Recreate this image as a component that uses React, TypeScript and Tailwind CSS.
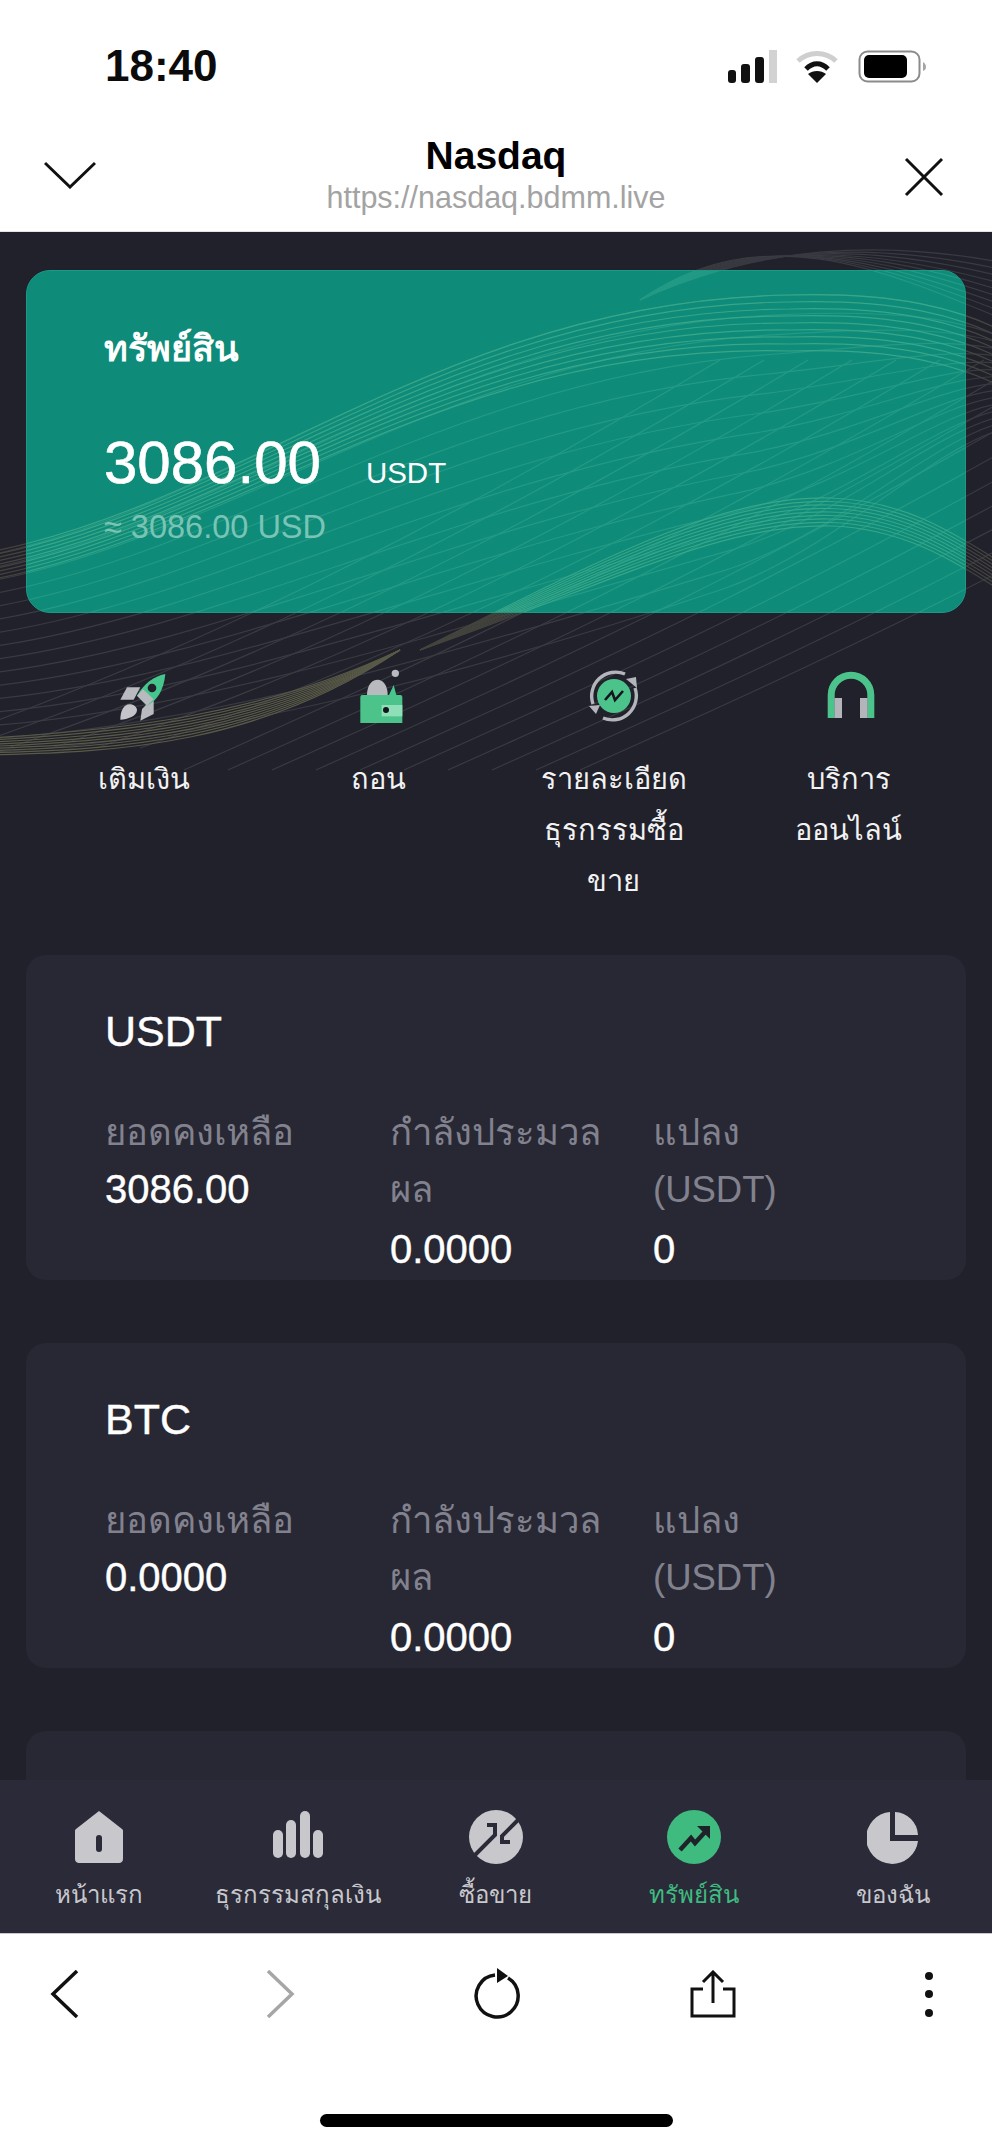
import type { FC } from "react";

const lerp = (a: number, b: number, t: number) => a + (b - a) * t;

// top and bottom edge of the fan of lines, page coordinates
const topEdge = [-10, 555, 250, 500, 450, 300, 790, 295, 900, 292, 960, 310, 1000, 330];
const bottomEdge = [-10, 752, 200, 742, 450, 680, 720, 590, 830, 553, 930, 450, 1000, 430];

const fanPath = (t: number) => {
	const p = topEdge.map((v, i) => lerp(v, bottomEdge[i], t));
	return `M${p[0]} ${p[1]}C${p[2]} ${p[3]} ${p[4]} ${p[5]} ${p[6]} ${p[7]}C${p[8]} ${p[9]} ${p[10]} ${p[11]} ${p[12]} ${p[13]}`;
};

const fanLines = Array.from({ length: 16 }, (_, i) => i / 15);
const bandLines = Array.from({ length: 9 }, (_, i) => i * 3.5);
const diagonals = Array.from({ length: 16 }, (_, i) => -80 + i * 44);

const Waves: FC<{ line: string; band: string; className: string }> = ({ line, band, className }) => (
	<svg viewBox="0 0 992 800" width="992" height="800" fill="none" className={className}>
		{fanLines.map((t) => (
			<path key={t} d={fanPath(t)} stroke={line} strokeWidth="1.2" />
		))}
		{diagonals.map((x) => (
			<path key={x} d={`M${x} ${x < 150 ? 748 : 770}C${x + 200} 680 ${x + 450} 570 ${x + 800} 360`} stroke={line} strokeWidth="1.2" />
		))}
		{bandLines.map((o) => (
			<path key={o} d={`M-10 ${552 + o}C250 ${500 + o} 450 ${300 + o * 1.5} 790 ${295 + o * 2}C900 ${292 + o * 2} 960 ${310 + o * 2} 1000 ${330 + o * 2}`} stroke={band} strokeWidth="1.2" />
		))}
		{bandLines.map((o) => (
			<path key={o} d={`M420 650C600 ${560 + o} 720 ${495 + o} 830 ${498 + o}C900 ${500 + o} 950 ${530 + o} 1000 ${562 + o}`} stroke={band} strokeWidth="1.2" />
		))}
		{bandLines.map((o) => (
			<path key={o} d={`M-10 ${738 + o * 0.6}C120 ${730 + o * 0.8} 260 ${716 + o} 400 650`} stroke="#5a5a48" strokeWidth="1.2" />
		))}
		{bandLines.map((o) => (
			<path key={o} d={`M640 300C760 ${245 - o} 880 ${240 + o} 1000 ${262 + o * 2}`} stroke={line} strokeWidth="1.2" />
		))}
	</svg>
);

const Rocket = () => (
	<svg viewBox="0 0 180 180" width="60" height="60" className="-translate-x-[7px] translate-y-[8px]">
		<path d="M40 86L60 49H100L80 86Z" fill="#b9b9c0" />
		<path d="M100 149L140 129V79L105 114Z" fill="#b9b9c0" />
		<path d="M175 9C140 16 110 39 90 74L120 104C150 89 170 59 175 9Z" fill="#46c68d" />
		<path d="M90 74L120 104L140 85L108 55Z" fill="#b9b9c0" />
		<circle cx="135" cy="51" r="13" fill="#21212b" />
		<path d="M68 100C50 100 40 120 40 146C62 146 90 135 90 118C90 108 80 100 68 100Z" fill="#c4c4ca" />
	</svg>
);

const Wallet = () => (
	<svg viewBox="0 0 180 180" width="60" height="60" className="-translate-x-[2px]">
		<circle cx="145" cy="31" r="11" fill="#b9b9c0" />
		<path d="M60 96C60 62 78 50 92 50C106 50 122 64 122 96Z" fill="#b9b9c0" />
		<path d="M126 96L140 66L148 96Z" fill="#46c68d" />
		<rect x="40" y="96" width="126" height="90" rx="6" fill="#4dc38c" />
		<rect x="104" y="126" width="62" height="34" fill="#8fe0b8" />
		<circle cx="117" cy="141" r="9" fill="#14141c" />
	</svg>
);

const Exchange = () => (
	<svg viewBox="0 0 60 60" width="60" height="60" fill="none">
		<path d="M9 41A24 24 0 0 1 41 11" stroke="#b4b4bb" strokeWidth="3.4" />
		<path d="M51 25A24 24 0 0 1 19 55" stroke="#b4b4bb" strokeWidth="3.4" />
		<path d="M42 16L52 14L53 25Z" fill="#b4b4bb" />
		<path d="M5 43L16 42L12 51Z" fill="#b4b4bb" />
		<circle cx="30" cy="33" r="17" fill="#4dc38c" />
		<path d="M21 37L28 29L31 37L39 28" stroke="#14141c" strokeWidth="2.6" />
	</svg>
);

const Headset = () => (
	<svg viewBox="0 0 60 60" width="60" height="60" fill="none" className="translate-x-[2px]">
		<path d="M10.2 55V32A19.8 19.8 0 0 1 49.8 32V55" stroke="#4dc38c" strokeWidth="7" />
		<rect x="13.5" y="35" width="7.5" height="20" fill="#b4b4bb" />
		<rect x="39" y="35" width="7.5" height="20" fill="#b4b4bb" />
	</svg>
);

const HomeTab = () => (
	<svg viewBox="0 0 48 54" width="48" height="54">
		<path d="M24 1L47 19C47.600 19.500 48 20 48 21V49C48 51.500 46 53 44 53H4C2 53 0 51.500 0 49V21C0 20 .4 19.500 1 19Z" fill="#c8c8cc" />
		<rect x="21" y="25" width="6" height="17" rx="3" fill="#2a2a38" />
	</svg>
);

const BarsTab = () => (
	<svg viewBox="0 0 50 54" width="50" height="54" fill="#c8c8cc">
		<rect x="0" y="20" width="10" height="28" rx="5" />
		<rect x="13" y="10" width="10" height="38" rx="5" />
		<rect x="27" y="1" width="10" height="47" rx="5" />
		<rect x="40" y="20" width="10" height="28" rx="5" />
	</svg>
);

const SwapTab = () => (
	<svg viewBox="0 0 54 54" width="54" height="54" fill="none">
		<circle cx="27" cy="27" r="27" fill="#c8c8cc" />
		<path d="M4 47L26 25V15H18" stroke="#2a2a38" strokeWidth="4" />
		<path d="M51 8L33 26V32H41" stroke="#2a2a38" strokeWidth="4" />
	</svg>
);

const TrendTab = () => (
	<svg viewBox="0 0 54 54" width="54" height="54" fill="none">
		<circle cx="27" cy="27" r="27" fill="#3fbb80" />
		<path d="M13 40L24 28L28 33L39 21" stroke="#20222a" strokeWidth="4.500" />
		<path d="M30 16H43V29Z" fill="#20222a" />
	</svg>
);

const PieTab = () => (
	<svg viewBox="0 0 52 54" width="52" height="54" fill="#c8c8cc">
		<path d="M23 2A26 26 0 1 0 51 31H23Z" />
		<path d="M28 2A24 24 0 0 1 51 25H28Z" />
	</svg>
);

const actions = [
	{ icon: <Rocket />, label: ["เติมเงิน"] },
	{ icon: <Wallet />, label: ["ถอน"] },
	{ icon: <Exchange />, label: ["รายละเอียด", "ธุรกรรมซื้อ", "ขาย"] },
	{ icon: <Headset />, label: ["บริการ", "ออนไลน์"] },
];

const coins = [
	{ name: "USDT", balance: "3086.00" },
	{ name: "BTC", balance: "0.0000" },
];

const tabs = [
	{ icon: <HomeTab />, label: "หน้าแรก" },
	{ icon: <BarsTab />, label: "ธุรกรรมสกุลเงิน" },
	{ icon: <SwapTab />, label: "ซื้อขาย" },
	{ icon: <TrendTab />, label: "ทรัพย์สิน", active: true },
	{ icon: <PieTab />, label: "ของฉัน" },
];

export default function App() {
	return (
		<div className="flex h-[2147px] w-[992px] flex-col overflow-hidden bg-white font-['Liberation_Sans','Noto_Sans',sans-serif]">
			<div className="flex h-[115px] flex-none items-start justify-between pl-[105px] pr-[66px] pt-[42px]">
				<span className="text-[44px] font-bold leading-[48px] text-[#0b0b0b]">18:40</span>
				<div className="flex items-center gap-[20px] pt-[8px]">
					<svg viewBox="0 0 49 33" width="49" height="33" className="-mr-[1px]">
						<rect x="0" y="20" width="8" height="13" rx="3" fill="#111" />
						<rect x="13" y="14" width="9" height="19" rx="3" fill="#111" />
						<rect x="27" y="7" width="9" height="26" rx="3" fill="#111" />
						<rect x="41" y="0" width="8" height="33" fill="#d2d2d2" />
					</svg>
					<svg viewBox="0 0 42 33" width="42" height="33" fill="none">
						<path d="M2 11C13 1 29 1 40 11" stroke="#cfcfcf" strokeWidth="5" />
						<path d="M10 19C17 12 25 12 32 19" stroke="#111" strokeWidth="5" />
						<path d="M21 33L12 24C17 20 25 20 30 24Z" fill="#111" />
					</svg>
					<svg viewBox="0 0 68 33" width="68" height="33" fill="none">
						<rect x="1.500" y="1.500" width="60" height="30" rx="8" stroke="#8b8b8b" strokeWidth="2" />
						<rect x="6" y="5" width="43" height="23" rx="5" fill="#000" />
						<path d="M65 12C67 13 68 15 68 17C68 19 67 20 65 21Z" fill="#a5a5a5" />
					</svg>
				</div>
			</div>
			<div className="grid h-[117px] flex-none grid-cols-[1fr_auto_1fr] border-b border-[#e4e4e4] px-[44px] pt-[19px]">
				<svg viewBox="0 0 52 28" width="52" height="28" fill="none" className="mt-[27px]">
					<path d="M1 2L26 26L51 2" stroke="#111" strokeWidth="3" />
				</svg>
				<div className="flex flex-col items-center">
					<span className="text-[39px] font-bold leading-[44px] text-black">Nasdaq</span>
					<span className="text-[30.5px] leading-[38px] text-[#a3a3a3]">https://nasdaq.bdmm.live</span>
				</div>
				<svg viewBox="0 0 40 40" width="40" height="40" fill="none" className="ml-auto mr-[4px] mt-[23px]">
					<path d="M2 2L38 38M38 2L2 38" stroke="#111" strokeWidth="3" />
				</svg>
			</div>

			<main className="relative min-h-0 flex-1 overflow-hidden bg-[#21212b] px-[26px] pt-[38px]">
				<Waves line="#3a3a42" band="#45453f" className="absolute left-0 top-[-232px]" />
				<section className="relative h-[343px] overflow-hidden rounded-[24px] border border-[#1c9a86] bg-[#0f8b79] pl-[77px] pt-[58px]">
					<Waves line="#239a86" band="#38a688" className="absolute left-[-27px] top-[-271px]" />
					<div className="relative">
						<h1 className="text-[36px] font-bold leading-[40px] text-white">ทรัพย์สิน</h1>
						<div className="mt-[64px] flex items-baseline gap-[45px] text-white">
							<span className="text-[60px] leading-[60px] [-webkit-text-stroke:0.6px_white]">3086.00</span>
							<span className="text-[29.5px]">USDT</span>
						</div>
						<p className="mt-[14px] text-[32.5px] leading-[36px] text-[#7ac4b6]">≈ 3086.00 USD</p>
					</div>
				</section>

				<div className="relative mt-[50px] grid grid-cols-4">
					{actions.map((a) => (
						<div key={a.label[0]} className="flex flex-col items-center">
							<div className="h-[60px]">{a.icon}</div>
							<div className="mt-[31px] text-center text-[29px] leading-[51px] text-[#f2f2f2]">
								{a.label.map((l) => (
									<div key={l}>{l}</div>
								))}
							</div>
						</div>
					))}
				</div>

				<div className="relative mt-[48px] flex flex-col gap-[63px]">
					{coins.map((c) => (
						<section key={c.name} className="h-[325px] flex-none rounded-[20px] bg-[#282835] pl-[79px] pt-[50px]">
							<h2 className="text-[43px] leading-[52px] text-white [-webkit-text-stroke:0.4px_white]">{c.name}</h2>
							<div className="mt-[47px] grid grid-cols-[285px_263px_1fr] text-[36.5px] leading-[57px]">
								<div>
									<div className="text-[#82828e]">ยอดคงเหลือ</div>
									<div className="text-[40px] text-white [-webkit-text-stroke:0.4px_white]">{c.balance}</div>
								</div>
								<div>
									<div className="text-[#82828e]">กำลังประมวล<br />ผล</div>
									<div className="mt-[3px] text-[40px] text-white [-webkit-text-stroke:0.4px_white]">0.0000</div>
								</div>
								<div>
									<div className="text-[#82828e]">แปลง<br />(USDT)</div>
									<div className="mt-[3px] text-[40px] text-white [-webkit-text-stroke:0.4px_white]">0</div>
								</div>
							</div>
						</section>
					))}
					<section className="h-[325px] flex-none rounded-[20px] bg-[#282835]" />
				</div>
			</main>

			<nav className="grid h-[154px] flex-none grid-cols-5 border-b border-[#c9c9c9] bg-[#2a2a38] pt-[30px]">
				{tabs.map((t) => (
					<div key={t.label} className="flex flex-col items-center">
						<div className="flex h-[54px] items-center">{t.icon}</div>
						<span className={t.active ? "mt-[13px] text-[24px] leading-[36px] text-[#3fbb80]" : "mt-[13px] text-[24px] leading-[36px] text-[#c8c8cc]"}>
							{t.label}
						</span>
					</div>
				))}
			</nav>

			<div className="h-[213px] flex-none bg-white pt-[36px]">
				<div className="flex justify-between pl-[40px] pr-[39px]">
					<svg viewBox="0 0 48 48" width="48" height="48" fill="none">
						<path d="M37 1L13 24L37 47" stroke="#111" strokeWidth="3.500" />
					</svg>
					<svg viewBox="0 0 48 48" width="48" height="48" fill="none">
						<path d="M12 1L36 24L12 47" stroke="#a6a6a6" strokeWidth="3.500" />
					</svg>
					<svg viewBox="0 0 48 48" width="48" height="48" fill="none" className="overflow-visible">
						<path d="M22 5.100A21 21 0 1 0 35 8" stroke="#111" strokeWidth="3.500" />
						<path d="M24 -2L35 6L24 13Z" fill="#111" />
					</svg>
					<svg viewBox="0 0 48 48" width="48" height="48" fill="none">
						<path d="M24 33V3M14 12L24 2L34 12" stroke="#111" strokeWidth="3" />
						<path d="M14 19H3V46H45V19H34" stroke="#111" strokeWidth="3" />
					</svg>
					<svg viewBox="0 0 48 48" width="48" height="48" fill="#111">
						<circle cx="24" cy="6" r="4" />
						<circle cx="24" cy="24" r="4" />
						<circle cx="24" cy="43" r="4" />
					</svg>
				</div>
				<div className="mx-auto mt-[96px] h-[13px] w-[353px] rounded-full bg-black" />
			</div>
		</div>
	);
}
